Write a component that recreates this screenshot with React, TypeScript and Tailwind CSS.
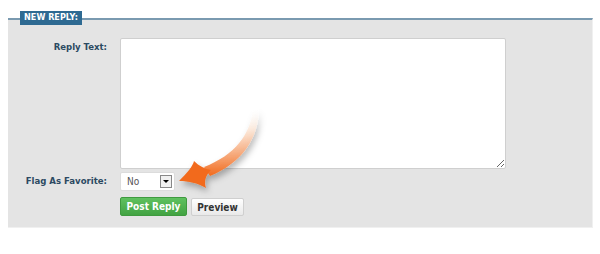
import React from "react"

const font = { fontFamily: '"DejaVu Sans Condensed", "DejaVu Sans", Verdana, sans-serif' }

function CurvedArrow() {
    // orange swoosh pointing at the select box
    return (
        <svg
            className="absolute left-[141px] top-[89px] pointer-events-none"
            width="130"
            height="110"
            viewBox="0 0 130 110"
        >
            <defs>
                <linearGradient id="shaft" x1="0" y1="0" x2="0" y2="1">
                    <stop offset="0" stopColor="#ffffff" stopOpacity="0" />
                    <stop offset="0.3" stopColor="#fdeadb" stopOpacity="0.85" />
                    <stop offset="1" stopColor="#f26b1d" />
                </linearGradient>
                <filter id="sh" x="-30%" y="-30%" width="160%" height="160%">
                    <feDropShadow dx="2" dy="4" stdDeviation="3" floodColor="#000" floodOpacity="0.3" />
                </filter>
            </defs>
            <g filter="url(#sh)">
                <path
                    d="M55 67 C86 55 102 34 104 8 L110 8 C110 38 93 63 61 76 Z"
                    fill="url(#shaft)"
                />
                <path
                    d="M30 81 C38 73 44 66 45 61 C50 66 56 69 62 70 C56 76 55 82 57 88 C48 83 40 81 30 81 Z"
                    fill="#f26b1d"
                />
            </g>
        </svg>
    )
}

export default function App() {
    return (
        <div className="w-[600px] h-[254px] bg-white pt-[11px]" style={font}>
            <div className="relative ml-[8px] w-[585px]">
                <div className="relative z-10 ml-[12px] mb-[-7px] w-[62px] h-[14px] bg-[#2e6a92] text-white text-[9px] font-bold flex items-center justify-center">
                    NEW REPLY:
                </div>
                <div className="bg-[#e4e4e4] border-t-2 border-[#7a9ab0] border-r border-b border-r-[#f0f0f0] border-b-[#f0f0f0] pt-[18px] pb-[11px]">
                    <div className="grid grid-cols-[99px_1fr] gap-x-[13px]">
                        <label className="text-right text-[9.5px] font-bold text-[#2c4a62] pt-[2px]">
                            Reply Text:
                        </label>
                        <textarea className="w-[386px] h-[131px] bg-white border border-[#cfcfcf] rounded-[2px] outline-none" />

                        <label className="mt-[3px] text-right text-[9.5px] font-bold text-[#2c4a62] h-[19px] flex items-center justify-end">
                            Flag As Favorite:
                        </label>
                        <div className="mt-[3px] w-[55px] h-[19px] bg-white border border-[#dcdcdc] rounded-[2px] flex items-center justify-between pl-[6px] pr-[2px]">
                            <span className="text-[10px] text-[#555]">No</span>
                            <span className="w-[12px] h-[13px] border border-[#888] bg-[#f0f0f0] flex items-center justify-center">
                                <span className="w-0 h-0 border-l-[3px] border-r-[3px] border-t-[3px] border-l-transparent border-r-transparent border-t-black" />
                            </span>
                        </div>

                        <div />
                        <div className="mt-[6px] flex gap-[4px]">
                            <button className="w-[67px] h-[19px] rounded-[2px] bg-gradient-to-b from-[#5fc15f] to-[#43a343] border border-[#3f9a3f] text-white text-[10px] font-bold">
                                Post Reply
                            </button>
                            <button className="w-[53px] h-[18px] mt-[1px] rounded-[2px] bg-gradient-to-b from-white to-[#e9e9e9] border border-[#cfcfcf] text-[#333] text-[10px] font-bold">
                                Preview
                            </button>
                        </div>
                    </div>
                </div>
                <CurvedArrow />
            </div>
        </div>
    )
}
